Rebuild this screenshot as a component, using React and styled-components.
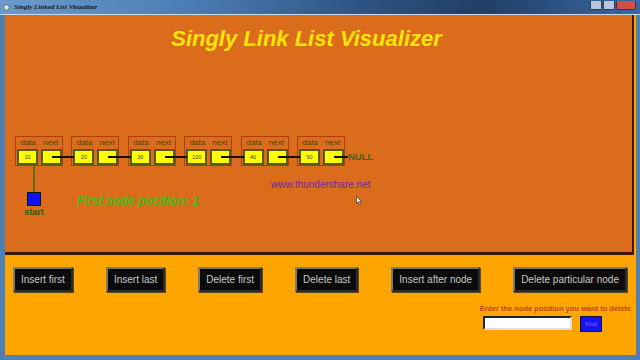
import React from "react";
import styled, { createGlobalStyle } from "styled-components";

const Global = createGlobalStyle`
  html, body { margin: 0; padding: 0; }
  body { width: 640px; height: 360px; overflow: hidden; font-family: "Liberation Sans", Arial, sans-serif; }
`;

const Window = styled.div`
  width: 640px;
  height: 360px;
  display: flex;
  flex-direction: column;
  background: #4f7fb3;
  box-sizing: border-box;
  padding: 0 4px 5px 5px;
  position: relative;
`;

const TitleBar = styled.div`
  height: 14px;
  margin: 0 -4px 0 -5px;
  padding: 0 4px 0 3px;
  display: flex;
  align-items: center;
  gap: 4px;
  background: linear-gradient(90deg, #6b9bcb 0%, #4a7db4 30%, #2e5686 55%, #1f3e68 75%, #3868a0 100%);
  border-bottom: 1px solid #c9dcef;
`;

const TitleText = styled.span`
  font-family: "Liberation Serif", serif;
  font-size: 7px;
  font-weight: bold;
  font-style: italic;
  color: #101820;
  flex: 1;
`;

const Controls = styled.div`
  display: flex;
  gap: 1px;
  margin-top: -3px;
`;

const Ctl = styled.span`
  width: ${(p) => p.$w}px;
  height: 8px;
  border-radius: 0 0 2px 2px;
  background: ${(p) => p.$bg};
  border: 1px solid #2a3a55;
  border-top: none;
`;

const Content = styled.div`
  flex: 1;
  display: flex;
  flex-direction: column;
  background: #ffa500;
`;

const Canvas = styled.div`
  height: 240px;
  margin-right: 2px;
  box-sizing: border-box;
  background: #da6c1c;
  border-right: 2px solid #3a1805;
  border-bottom: 3px solid #3a1805;
  padding: 11px 0 0 10px;
  display: flex;
  flex-direction: column;
`;

const Heading = styled.h1`
  margin: 0;
  font-size: 22px;
  line-height: 26px;
  font-style: italic;
  font-weight: bold;
  color: #ffe40a;
  text-align: center;
  padding-right: 34px;
`;

const NodeRow = styled.div`
  display: flex;
  align-items: flex-start;
  margin-top: 84px;
`;

const Node = styled.div`
  border: 1px solid #b03c14;
  width: 45px;
  height: 28px;
  display: flex;
  flex-direction: column;
  padding-left: 1px;
`;

const Labels = styled.div`
  display: flex;
  height: 11px;
  font-size: 8px;
  line-height: 11px;
  color: #4a4708;
`;

const Label = styled.span`
  width: 23px;
  text-align: center;
`;

const Boxes = styled.div`
  display: flex;
  gap: 3px;
  margin-top: 1px;
`;

const Cell = styled.div`
  width: 17px;
  height: 12px;
  background: #ffff00;
  border: 2px solid #55591a;
  font-size: 5.5px;
  line-height: 12px;
  text-align: center;
  color: #3a3a10;
`;

const Link = styled.div`
  position: relative;
  z-index: 1;
  width: ${(p) => p.$w + (p.$end ? 11 : 14)}px;
  height: 2px;
  background: #111;
  margin: 20px ${(p) => (p.$end ? 0 : -3)}px 0 -11px;
`;

const Null = styled.span`
  margin-top: 15px;
  font-size: 9.5px;
  font-weight: bold;
  color: #3f6614;
`;

const InfoRow = styled.div`
  display: flex;
  align-items: flex-start;
`;

const Pointer = styled.div`
  width: 24px;
  margin-left: 7px;
  display: flex;
  flex-direction: column;
  align-items: center;
`;

const Stem = styled.div`
  width: 2px;
  height: 26px;
  background: #6a6a14;
`;

const Head = styled.div`
  width: 12px;
  height: 12px;
  background: #0a14f0;
  border: 1px solid #111;
`;

const StartText = styled.span`
  font-size: 9px;
  font-weight: bold;
  color: #2f5a10;
  line-height: 12px;
`;

const Position = styled.span`
  margin: 28px 0 0 31px;
  font-size: 12px;
  font-weight: bold;
  font-style: italic;
  color: #3fc01a;
  line-height: 14px;
`;

const Site = styled.span`
  margin: 13px 0 0 72px;
  font-size: 10px;
  line-height: 12px;
  color: #6a2aa8;
`;

const Cursor = styled.svg`
  position: absolute;
  left: 356px;
  top: 196px;
`;

const Panel = styled.div`
  flex: 1;
  display: flex;
  flex-direction: column;
  padding: 12px 9px 0 8px;
`;

const ButtonRow = styled.div`
  display: flex;
  justify-content: space-between;
`;

const Button = styled.button`
  height: 25px;
  padding: 0 6px;
  background: #0b0b0b;
  color: #c8c8c8;
  font-family: "Liberation Sans", Arial, sans-serif;
  font-size: 10px;
  border: 2px solid;
  border-color: #7a7a7a #2c2c2c #2c2c2c #7a7a7a;
  box-shadow: 1px 1px 0 #5a4a20;
`;

const Form = styled.div`
  display: flex;
  flex-direction: column;
  align-items: flex-end;
  margin-top: 12px;
  margin-right: -4px;
`;

const Prompt = styled.span`
  font-size: 7.5px;
  font-weight: bold;
  color: #c2430c;
  line-height: 9px;
`;

const FormRow = styled.div`
  display: flex;
  align-items: flex-start;
  gap: 8px;
  margin: 3px 29px 0 0;
`;

const Input = styled.input`
  width: 85px;
  height: 10px;
  padding: 0;
  border: 2px solid;
  border-color: #222 #ddd #ddd #222;
  background: #fff;
`;

const Find = styled.button`
  width: 22px;
  height: 16px;
  padding: 0;
  background: #1414f5;
  border: 1px solid #101040;
  color: #9a6ae0;
  font-family: "Liberation Sans", Arial, sans-serif;
  font-size: 6px;
`;

const nodes = [10, 20, 30, 100, 40, 50];
const actions = [
  "Insert first",
  "Insert last",
  "Delete first",
  "Delete last",
  "Insert after node",
  "Delete particular node",
];

export default function App() {
  return (
    <Window>
      <Global />
      <TitleBar>
        <svg width="7" height="7" viewBox="0 0 7 7">
          <circle cx="3.5" cy="3.5" r="2.8" fill="#d8e4ee" stroke="#556" strokeWidth="0.8" />
        </svg>
        <TitleText>Singly Linked List Visualizer</TitleText>
        <Controls>
          <Ctl $w={10} $bg="#b8c8dc" />
          <Ctl $w={10} $bg="#b8c8dc" />
          <Ctl $w={18} $bg="#d0504a" />
        </Controls>
      </TitleBar>
      <Content>
        <Canvas>
          <Heading>Singly Link List Visualizer</Heading>
          <NodeRow>
            {nodes.map((n, i) => {
              const last = i === nodes.length - 1;
              return (
                <React.Fragment key={n}>
                  <Node>
                    <Labels>
                      <Label>data</Label>
                      <Label>next</Label>
                    </Labels>
                    <Boxes>
                      <Cell>{n}</Cell>
                      <Cell />
                    </Boxes>
                  </Node>
                  <Link $w={last ? 3 : 8.4} $end={last} />
                </React.Fragment>
              );
            })}
            <Null>NULL</Null>
          </NodeRow>
          <InfoRow>
            <Pointer>
              <Stem />
              <Head />
              <StartText>start</StartText>
            </Pointer>
            <Position>First node position: 1</Position>
            <Site>www.thundershare.net</Site>
          </InfoRow>
        </Canvas>
        <Panel>
          <ButtonRow>
            {actions.map((a) => (
              <Button key={a}>{a}</Button>
            ))}
          </ButtonRow>
          <Form>
            <Prompt>Enter the node position you want to delete</Prompt>
            <FormRow>
              <Input />
              <Find>Find</Find>
            </FormRow>
          </Form>
        </Panel>
      </Content>
      <Cursor width="6" height="9" viewBox="0 0 6 9">
        <path d="M0.5 0.5 L0.5 7.5 L2.2 5.8 L3.5 8.5 L4.6 8 L3.4 5.4 L5.5 5.4 Z" fill="#fff" stroke="#222" strokeWidth="0.6" />
      </Cursor>
    </Window>
  );
}
